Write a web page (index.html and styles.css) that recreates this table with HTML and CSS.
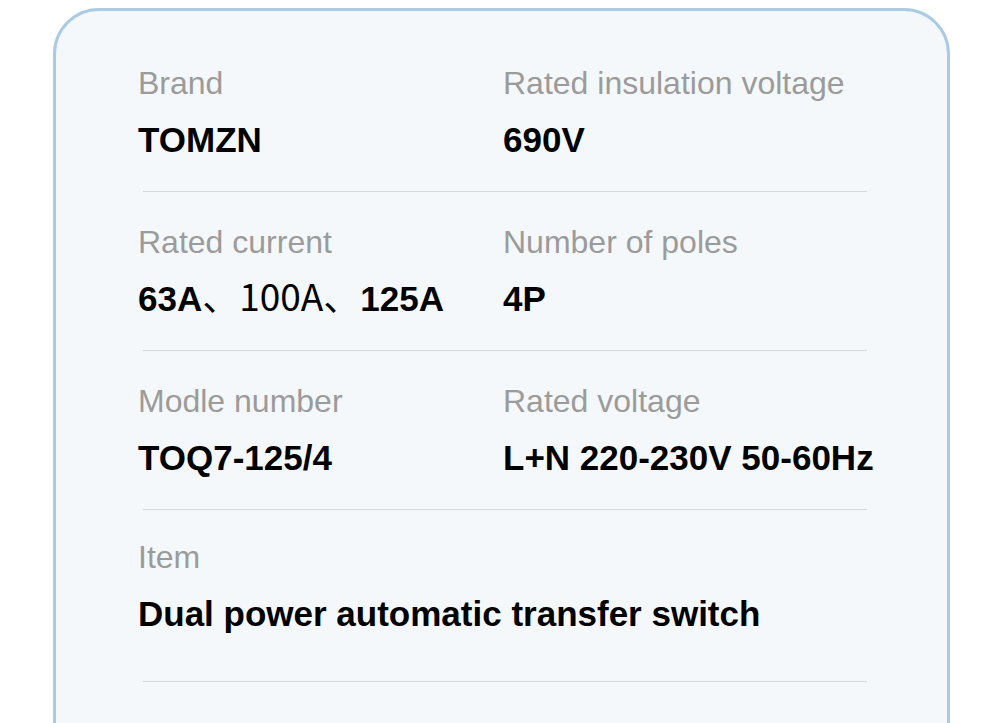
FILE: index.html
```html
<!DOCTYPE html>
<html lang="en">
<head>
    <meta charset="UTF-8">
    <meta name="viewport" content="width=device-width, initial-scale=1.0">
    <title>TOMZN TOQ7-125/4 - Specifications</title>
    <link rel="stylesheet" href="styles.css">
</head>
<body>
    <div class="spec-card">
        <div class="spec-row">
            <div class="spec-cell">
                <div class="spec-label">Brand</div>
                <div class="spec-value">TOMZN</div>
            </div>
            <div class="spec-cell">
                <div class="spec-label">Rated insulation voltage</div>
                <div class="spec-value">690V</div>
            </div>
        </div>
        <div class="rule"></div>

        <div class="spec-row">
            <div class="spec-cell">
                <div class="spec-label">Rated current</div>
                <div class="spec-value">63A<span class="plain">、100A、</span>125A</div>
            </div>
            <div class="spec-cell">
                <div class="spec-label">Number of poles</div>
                <div class="spec-value">4P</div>
            </div>
        </div>
        <div class="rule"></div>

        <div class="spec-row">
            <div class="spec-cell">
                <div class="spec-label">Modle number</div>
                <div class="spec-value">TOQ7-125/4</div>
            </div>
            <div class="spec-cell">
                <div class="spec-label">Rated voltage</div>
                <div class="spec-value">L+N 220-230V 50-60Hz</div>
            </div>
        </div>
        <div class="rule"></div>

        <div class="spec-row spec-row-wide">
            <div class="spec-cell">
                <div class="spec-label">Item</div>
                <div class="spec-value">Dual power automatic transfer switch</div>
            </div>
        </div>
        <div class="rule"></div>
    </div>
</body>
</html>
```

FILE: styles.css
```css
body {
    margin: 0;
    padding: 8px 50px 0 53px;
    background: #fff;
    font-family: "Liberation Sans", Arial, sans-serif;
    overflow: hidden; /* карточка уходит ниже окна */
}

.spec-card {
    background-color: #f5f8fa;
    border: 3px solid #abcae4;
    border-radius: 46px;
    padding: 52px 80px 110px 82px;
}

.spec-row {
    display: grid;
    grid-template-columns: 365px 1fr;
    padding: 30px 0 29px;
}

.spec-row:first-child {
    padding-top: 0;
}

.spec-row-wide {
    grid-template-columns: 1fr;
    padding: 27px 0 45px;
}

.spec-label {
    color: #9b9b9b;
    font-size: 32px;
    line-height: 40px;
    white-space: nowrap;
}

.spec-value {
    margin-top: 15px;
    color: #000;
    font-size: 35px;
    font-weight: bold;
    line-height: 44px;
    white-space: nowrap;
}

/* "、100A、" набрано другим шрифтом, без жирного */
.spec-value .plain {
    font-family: "Noto Sans CJK SC", sans-serif;
    font-weight: normal;
    font-size: 37px;
    line-height: 0;
}

.rule {
    height: 1px;
    margin-left: 5px;
    background-color: #d6d9dc;
}
```
